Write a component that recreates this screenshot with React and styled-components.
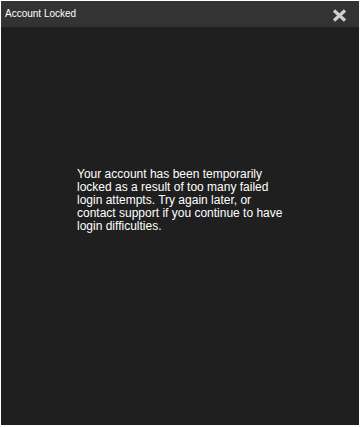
import React from "react";
import styled, { createGlobalStyle } from "styled-components";

const GlobalStyle = createGlobalStyle`
  html, body {
    margin: 0;
    padding: 0;
    background: #ffffff;
  }
  body {
    font-family: "Liberation Sans", Arial, sans-serif;
  }
`;

const Page = styled.div`
  padding: 1px 1px 0 1px;
`;

const Dialog = styled.div`
  width: 358px;
  height: 424px;
  background: #1f1f1f;
  display: flex;
  flex-direction: column;
`;

const TitleBar = styled.div`
  height: 26px;
  background: #333333;
  display: flex;
  align-items: center;
  justify-content: space-between;
  padding: 0 12px 0 4px;
  flex-shrink: 0;
`;

const Title = styled.span`
  color: #ffffff;
  font-size: 10px;
  line-height: 12px;
  font-family: "Liberation Sans", Arial, sans-serif;
`;

const CloseButton = styled.button`
  border: none;
  background: transparent;
  padding: 0;
  width: 15px;
  height: 13px;
  display: flex;
  align-items: center;
  justify-content: center;
  cursor: pointer;
  margin-top: 2px;
`;

const Body = styled.div`
  flex: 1;
  padding: 141px 0 0 76px;
`;

const Message = styled.p`
  margin: 0;
  width: 215px;
  color: #ffffff;
  font-size: 12px;
  line-height: 13px;
  font-family: "Liberation Sans", Arial, sans-serif;
`;

export default function App() {
  return (
    <>
      <GlobalStyle />
      <Page>
        <Dialog>
          <TitleBar>
            <Title>Account Locked</Title>
            <CloseButton aria-label="Close">
              <svg width="15" height="13" viewBox="0 0 15 13">
                <path
                  d="M2 1.5 L13 11.5 M13 1.5 L2 11.5"
                  stroke="#cfcfcf"
                  strokeWidth="3.2"
                  strokeLinecap="butt"
                  fill="none"
                />
              </svg>
            </CloseButton>
          </TitleBar>
          <Body>
            <Message>
              Your account has been temporarily locked as a result of too many
              failed login attempts. Try again later, or contact support if you
              continue to have login difficulties.
            </Message>
          </Body>
        </Dialog>
      </Page>
    </>
  );
}
